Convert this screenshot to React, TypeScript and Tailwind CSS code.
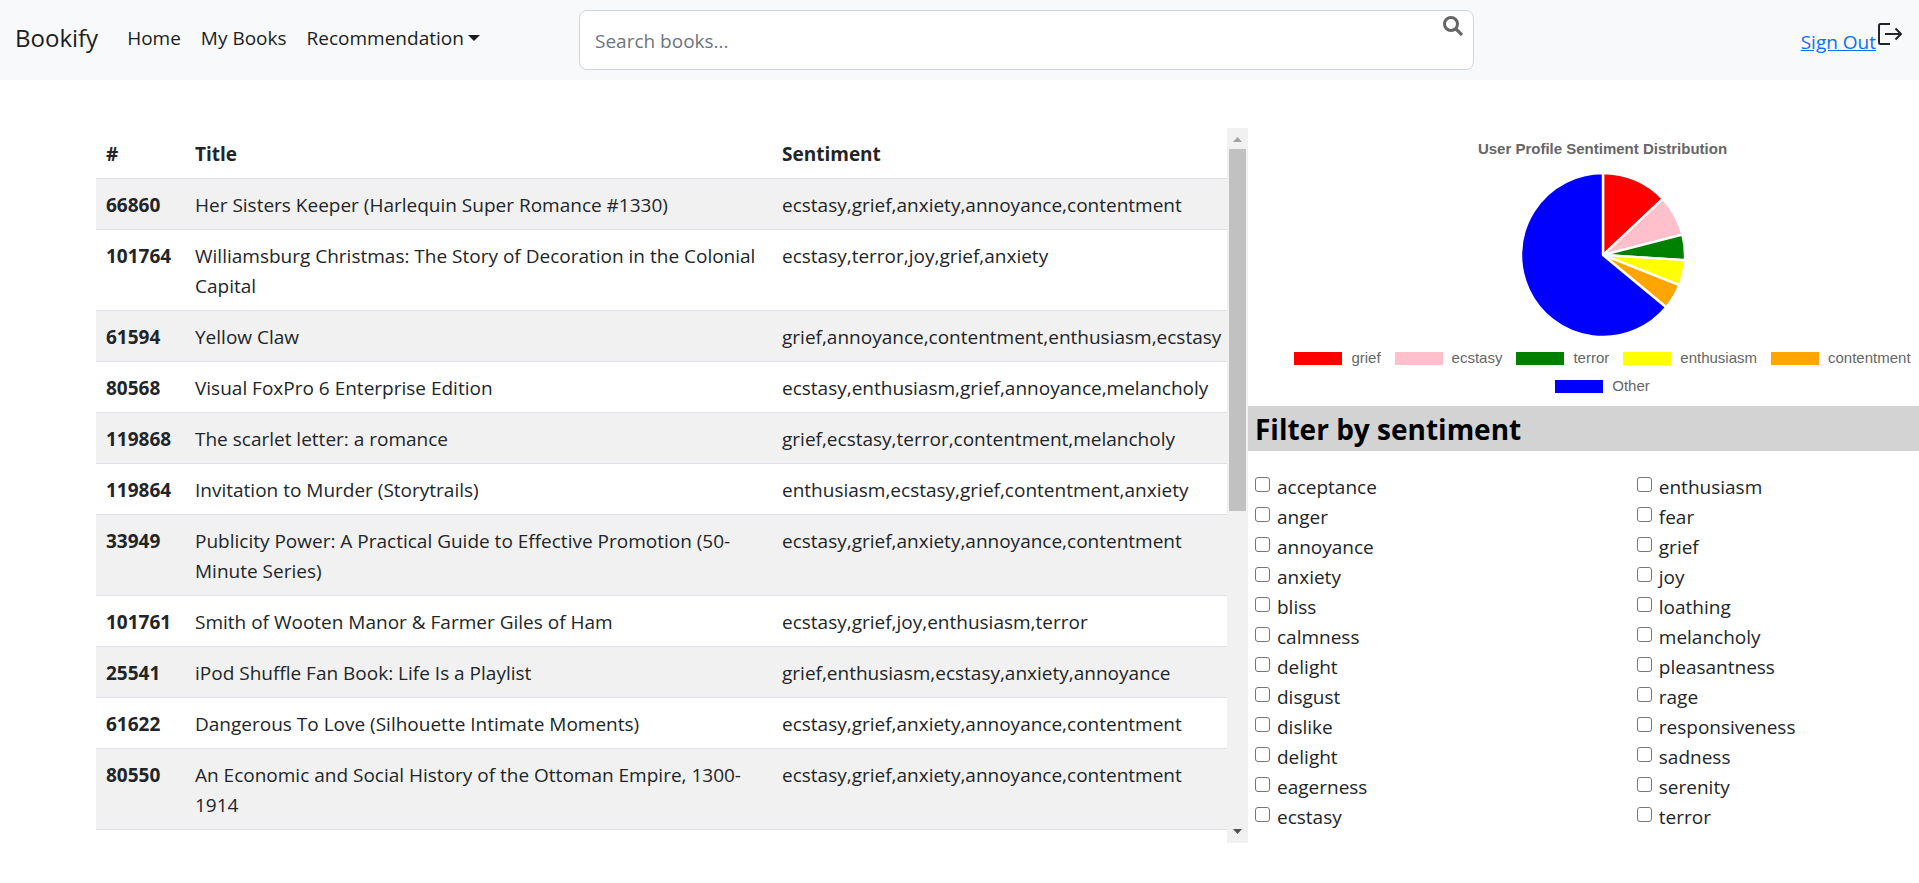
import React from 'react';

type Book = { id: string; title: string; sentiment: string };

const books: Book[] = [
  { id: '66860', title: 'Her Sisters Keeper (Harlequin Super Romance #1330)', sentiment: 'ecstasy,grief,anxiety,annoyance,contentment' },
  { id: '101764', title: 'Williamsburg Christmas: The Story of Decoration in the Colonial Capital', sentiment: 'ecstasy,terror,joy,grief,anxiety' },
  { id: '61594', title: 'Yellow Claw', sentiment: 'grief,annoyance,contentment,enthusiasm,ecstasy' },
  { id: '80568', title: 'Visual FoxPro 6 Enterprise Edition', sentiment: 'ecstasy,enthusiasm,grief,annoyance,melancholy' },
  { id: '119868', title: 'The scarlet letter: a romance', sentiment: 'grief,ecstasy,terror,contentment,melancholy' },
  { id: '119864', title: 'Invitation to Murder (Storytrails)', sentiment: 'enthusiasm,ecstasy,grief,contentment,anxiety' },
  { id: '33949', title: 'Publicity Power: A Practical Guide to Effective Promotion (50-Minute Series)', sentiment: 'ecstasy,grief,anxiety,annoyance,contentment' },
  { id: '101761', title: 'Smith of Wooten Manor & Farmer Giles of Ham', sentiment: 'ecstasy,grief,joy,enthusiasm,terror' },
  { id: '25541', title: 'iPod Shuffle Fan Book: Life Is a Playlist', sentiment: 'grief,enthusiasm,ecstasy,anxiety,annoyance' },
  { id: '61622', title: 'Dangerous To Love (Silhouette Intimate Moments)', sentiment: 'ecstasy,grief,anxiety,annoyance,contentment' },
  { id: '80550', title: 'An Economic and Social History of the Ottoman Empire, 1300-1914', sentiment: 'ecstasy,grief,anxiety,annoyance,contentment' },
];

const slices = [
  { label: 'grief', value: 13, fill: 'fill-[#ff0000]', swatch: 'bg-[#ff0000]' },
  { label: 'ecstasy', value: 8, fill: 'fill-[#ffc0cb]', swatch: 'bg-[#ffc0cb]' },
  { label: 'terror', value: 5, fill: 'fill-[#008000]', swatch: 'bg-[#008000]' },
  { label: 'enthusiasm', value: 5, fill: 'fill-[#ffff00]', swatch: 'bg-[#ffff00]' },
  { label: 'contentment', value: 5, fill: 'fill-[#ffa500]', swatch: 'bg-[#ffa500]' },
  { label: 'Other', value: 64, fill: 'fill-[#0000ff]', swatch: 'bg-[#0000ff]' },
];

const filterColumns = [
  ['acceptance', 'anger', 'annoyance', 'anxiety', 'bliss', 'calmness', 'delight', 'disgust', 'dislike', 'delight', 'eagerness', 'ecstasy'],
  ['enthusiasm', 'fear', 'grief', 'joy', 'loathing', 'melancholy', 'pleasantness', 'rage', 'responsiveness', 'sadness', 'serenity', 'terror'],
];

function point(percent: number, radius: number) {
  const angle = (percent / 100) * Math.PI * 2;
  return `${(83 + radius * Math.sin(angle)).toFixed(2)} ${(83 - radius * Math.cos(angle)).toFixed(2)}`;
}

function PieChart() {
  let start = 0;
  return (
    <svg viewBox="0 0 166 166" className="h-[166px] w-[166px] shrink-0" role="img" aria-label="Sentiment pie chart">
      {slices.map((slice) => {
        const end = start + slice.value;
        const d = `M83 83 L${point(start, 82)} A82 82 0 ${slice.value > 50 ? 1 : 0} 1 ${point(end, 82)} Z`;
        start = end;
        return <path key={slice.label} d={d} className={slice.fill} stroke="#fff" strokeWidth="2.4" strokeLinejoin="bevel" />;
      })}
    </svg>
  );
}

function Navbar() {
  return (
    <header className="flex h-20 items-start bg-[#f8f9fb] pl-[15px] pr-4">
      <div className="flex h-[76px] w-[564px] shrink-0 items-center">
        <a href="#" className="mr-[29px] text-[24px] text-[#1b1d1f]">Bookify</a>
        <nav className="flex items-center gap-5 text-[#1b1d1f]">
          <a href="#">Home</a>
          <a href="#">My Books</a>
          <button type="button" className="flex items-center gap-1">
            Recommendation
            <svg viewBox="0 0 12 6" className="h-[6px] w-3 fill-current" aria-hidden="true">
              <path d="M0 0h12L6 6z" />
            </svg>
          </button>
        </nav>
      </div>
      <form className="relative mt-[10px] w-[48%] max-w-[895px]">
        <input
          type="text"
          aria-label="Search books"
          placeholder="Search books..."
          className="h-[60px] w-full rounded-lg border border-[#ced4da] bg-white px-[15px] pt-[2px] placeholder:text-[#6c757d]"
        />
        <button type="button" aria-label="Search" className="absolute right-[11px] top-[6px]">
          <svg viewBox="0 0 20 20" className="h-5 w-5" fill="none" stroke="#666" aria-hidden="true">
            <circle cx="8" cy="8" r="6.500" strokeWidth="3" />
            <path d="M12.500 12.500l6.500 6.500" strokeWidth="3.200" />
          </svg>
        </button>
      </form>
      <div className="ml-auto flex">
        <a href="#" className="mt-[27px] text-[#0d6efd] underline">Sign Out</a>
        <svg viewBox="0 0 26 24" className="ml-px mt-[22px] h-6 w-[26px]" fill="none" stroke="#212529" strokeWidth="2" aria-hidden="true">
          <path d="M13 2H3.500Q2 2 2 3.500V20.500Q2 22 3.500 22H13" />
          <path d="M8 12h16M18.500 6.500L24 12l-5.500 5.500" />
        </svg>
      </div>
    </header>
  );
}

function BookTable() {
  return (
    <section className="ml-24 flex h-[715px] w-3/5 min-w-[1152px]">
      <div className="min-w-0 flex-1 overflow-hidden">
        <table className="w-full table-fixed border-collapse text-left">
          <colgroup>
            <col className="w-[89px]" />
            <col />
            <col className="w-[455px]" />
          </colgroup>
          <thead>
            <tr className="border-b border-[#dee2e6]">
              <th className="px-[10px] pb-[9px] pt-[11px]">#</th>
              <th className="px-[10px] pb-[9px] pt-[11px]">Title</th>
              <th className="px-[10px] pb-[9px] pt-[11px]">Sentiment</th>
            </tr>
          </thead>
          <tbody>
            {books.map((book) => (
              <tr key={book.id} className="border-b border-[#dee2e6] align-top odd:bg-[#f1f1f1]">
                <th scope="row" className="px-[10px] pb-[9px] pt-[11px]">{book.id}</th>
                <td className="px-[10px] pb-[9px] pt-[11px]">{book.title}</td>
                <td className="whitespace-nowrap px-[10px] pb-[9px] pt-[11px]">{book.sentiment}</td>
              </tr>
            ))}
          </tbody>
        </table>
      </div>
      <div className="flex w-[21px] shrink-0 flex-col items-center bg-[#f1f1f1]" aria-hidden="true">
        <svg viewBox="0 0 21 21" className="h-[21px] w-[21px] fill-[#a3a3a3]">
          <path d="M6 14h9l-4.500-5z" />
        </svg>
        <div className="h-[362px] w-[17px] bg-[#c1c1c1]" />
        <svg viewBox="0 0 21 21" className="mt-auto h-[21px] w-[21px] fill-[#505050]">
          <path d="M6 7h9l-4.500 5z" />
        </svg>
      </div>
    </section>
  );
}

function SentimentChart() {
  return (
    <section className="flex h-[278px] flex-col items-center pl-[38px] font-['Liberation_Sans',Arial,sans-serif] text-[15px] leading-5 text-[#666]">
      <h2 className="mb-[13px] mt-[11px] font-bold">User Profile Sentiment Distribution</h2>
      <PieChart />
      <ul className="mt-[10px] flex flex-wrap justify-center gap-x-[14px] gap-y-2">
        {slices.map((slice) => (
          <li key={slice.label} className="flex items-center gap-[9px]">
            <span className={`h-[13px] w-12 ${slice.swatch}`} />
            {slice.label}
          </li>
        ))}
      </ul>
    </section>
  );
}

function SentimentFilter() {
  return (
    <section>
      <h2 className="bg-[#d3d3d3] pl-[7px] pt-[2px] text-[28px] leading-[43px] font-bold text-black">Filter by sentiment</h2>
      <div className="grid grid-cols-[23fr_17fr] pl-[7px] pt-[21px]">
        {filterColumns.map((column, c) => (
          <ul key={c}>
            {column.map((name, i) => (
              <li key={i} className="flex h-[30px] items-start">
                <input
                  type="checkbox"
                  id={`filter-${c}-${i}`}
                  className="mt-[5px] h-[15px] w-[15px] appearance-none rounded-[3px] border border-[#767676] bg-white checked:bg-[#0d6efd]"
                />
                <label htmlFor={`filter-${c}-${i}`} className="pl-[7px]">{name}</label>
              </li>
            ))}
          </ul>
        ))}
      </div>
    </section>
  );
}

export default function App() {
  return (
    <div className="min-h-screen bg-white font-['Open_Sans','Noto_Sans',sans-serif] text-[19px] leading-[30px] text-[#212529]">
      <Navbar />
      <main className="flex pt-12">
        <BookTable />
        <aside className="min-w-0 flex-1">
          <SentimentChart />
          <SentimentFilter />
        </aside>
      </main>
    </div>
  );
}
